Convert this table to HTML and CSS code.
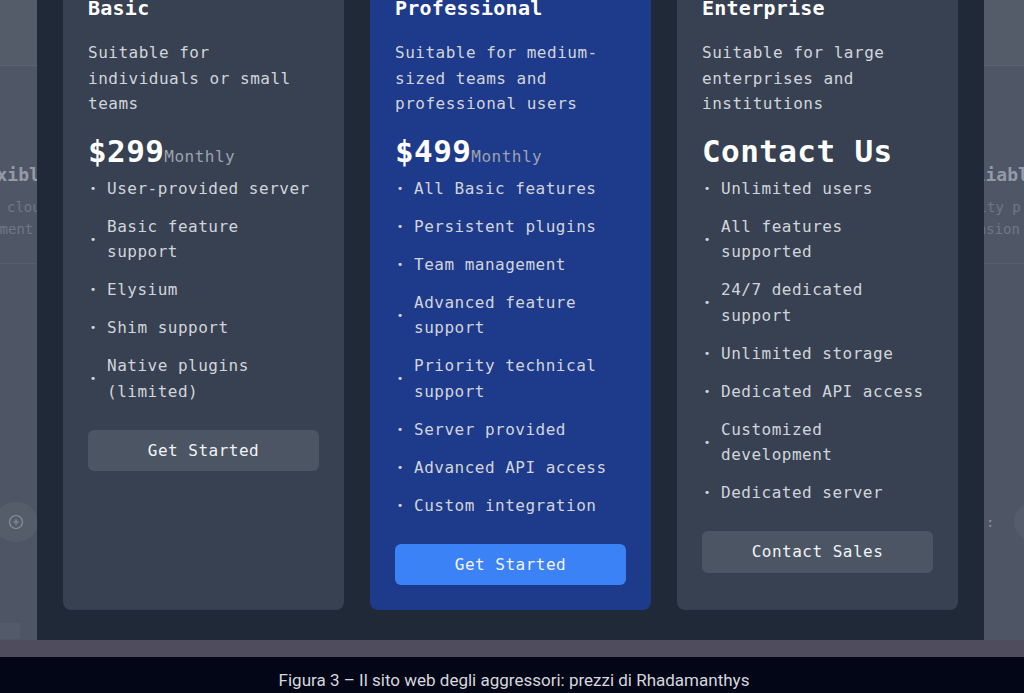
FILE: index.html
```html
<!DOCTYPE html>
<html lang="en">
<head>
<meta charset="utf-8">
<title>Pricing</title>
<link rel="stylesheet" href="styles.css">
</head>
<body>
<div class="screen">
  <div class="bg">
    <div class="bg-main">
      <div class="bg-side bg-left">
        <div class="bg-top"></div>
        <div class="bg-feature">
          <div class="frag-title fl-title">Flexible</div>
          <div class="frag-line fl-l1">Hybrid cloud</div>
          <div class="frag-line fl-l2">deployment</div>
        </div>
        <div class="bg-action">
          <div class="circle-btn">
            <svg width="16" height="16" viewBox="0 0 16 16"><circle cx="8" cy="8" r="6.5" fill="none" stroke="#8b919c" stroke-width="1.2"/><path d="M8 5.2v5.6M5.2 8h5.6" stroke="#8b919c" stroke-width="1.2"/></svg>
          </div>
        </div>
        <div class="bg-chip"></div>
      </div>
      <div class="bg-side bg-right">
        <div class="bg-top"></div>
        <div class="bg-feature">
          <div class="frag-title fr-title">Reliable</div>
          <div class="frag-line fr-l1">Stability p</div>
          <div class="frag-line fr-l2">extension</div>
        </div>
        <div class="bg-action bg-action-right">
          <span class="colon">:</span>
          <div class="circle-btn circle-right"></div>
        </div>
      </div>
    </div>
    <div class="bg-footer"></div>
  </div>

  <div class="overlay">
    <div class="modal">
      <div class="cards">
        <div class="card">
          <h3 class="plan">Basic</h3>
          <p class="desc">Suitable for individuals or small teams</p>
          <div class="price">$299<span class="per">Monthly</span></div>
          <ul class="features">
            <li><span class="dot">•</span><span>User-provided server</span></li>
            <li><span class="dot">•</span><span>Basic feature support</span></li>
            <li><span class="dot">•</span><span>Elysium</span></li>
            <li><span class="dot">•</span><span>Shim support</span></li>
            <li><span class="dot">•</span><span>Native plugins (limited)</span></li>
          </ul>
          <button class="btn">Get Started</button>
        </div>
        <div class="card card-pro">
          <h3 class="plan">Professional</h3>
          <p class="desc">Suitable for medium-sized teams and professional users</p>
          <div class="price">$499<span class="per">Monthly</span></div>
          <ul class="features">
            <li><span class="dot">•</span><span>All Basic features</span></li>
            <li><span class="dot">•</span><span>Persistent plugins</span></li>
            <li><span class="dot">•</span><span>Team management</span></li>
            <li><span class="dot">•</span><span>Advanced feature support</span></li>
            <li><span class="dot">•</span><span>Priority technical support</span></li>
            <li><span class="dot">•</span><span>Server provided</span></li>
            <li><span class="dot">•</span><span>Advanced API access</span></li>
            <li><span class="dot">•</span><span>Custom integration</span></li>
          </ul>
          <button class="btn btn-primary">Get Started</button>
        </div>
        <div class="card">
          <h3 class="plan">Enterprise</h3>
          <p class="desc">Suitable for large enterprises and institutions</p>
          <div class="price">Contact Us</div>
          <ul class="features">
            <li><span class="dot">•</span><span>Unlimited users</span></li>
            <li><span class="dot">•</span><span>All features supported</span></li>
            <li><span class="dot">•</span><span>24/7 dedicated support</span></li>
            <li><span class="dot">•</span><span>Unlimited storage</span></li>
            <li><span class="dot">•</span><span>Dedicated API access</span></li>
            <li><span class="dot">•</span><span>Customized development</span></li>
            <li><span class="dot">•</span><span>Dedicated server</span></li>
          </ul>
          <button class="btn">Contact Sales</button>
        </div>
      </div>
    </div>
  </div>
</div>
<div class="caption">Figura 3 – Il sito web degli aggressori: prezzi di Rhadamanthys</div>
</body>
</html>
```
FILE: styles.css
```css
* {
  box-sizing: border-box;
  margin: 0;
  padding: 0;
}

html, body {
  width: 1024px;
  height: 693px;
  overflow: hidden;
}

body {
  background: #020617;
  font-family: "DejaVu Sans Mono", "Liberation Mono", monospace;
}

.screen {
  position: relative;
  height: 657px;
  overflow: hidden;
}

/* dimmed page behind the modal */
.bg {
  display: flex;
  flex-direction: column;
  height: 100%;
  background: #4e5665;
}

.bg-main {
  flex: 1;
  display: flex;
  justify-content: space-between;
}

.bg-side {
  width: 40px;
  overflow: hidden;
  display: flex;
  flex-direction: column;
  white-space: nowrap;
}

.bg-left {
  width: 37px;
}

.bg-top {
  height: 66px;
  background: #545b69;
  border-bottom: 1px solid #5b6270;
}

.bg-feature {
  height: 198px;
  padding-top: 97px;
  border-bottom: 1px solid #575e6c;
  background: #4f5766;
}

.frag-title {
  font-size: 18px;
  line-height: 24px;
  font-weight: 700;
  color: #959ba6;
}

.frag-line {
  font-size: 14px;
  line-height: 22px;
  color: #6f7784;
}

.fl-title { margin-left: -36px; }
.fl-l1 { margin-left: -52px; margin-top: 9px; }
.fl-l2 { margin-left: -51px; }

.fr-title { margin-left: -31px; }
.fr-l1 { margin-left: -56px; margin-top: 9px; }
.fr-l2 { margin-left: -40px; }

.bg-action {
  margin-top: 238px;
  height: 40px;
  display: flex;
  align-items: center;
}

.circle-btn {
  width: 44px;
  height: 40px;
  border-radius: 50%;
  background: #555d6b;
  display: flex;
  align-items: center;
  justify-content: center;
  margin-left: -6px;
  flex-shrink: 0;
}

.bg-action-right {
  gap: 8px;
}

.colon {
  margin-left: 2px;
  color: #8b919c;
  font-size: 14px;
}

.circle-right {
  margin-left: 12px;
}

.bg-chip {
  margin-top: 81px;
  width: 20px;
  height: 16px;
  background: #535b6a;
}

.bg-footer {
  height: 17px;
  background: #4f4c5e;
}

/* modal */
.overlay {
  position: absolute;
  top: 0;
  left: 0;
  right: 0;
}

.modal {
  width: 947px;
  margin-left: 37px;
  margin-top: -57px;
  background: #1f2937;
  padding: 26px 26px 30px 26px;
}

.cards {
  display: grid;
  grid-template-columns: repeat(3, 1fr);
  column-gap: 26px;
}

.card {
  background: #374151;
  border-radius: 8px;
  padding: 25px;
}

.card-pro {
  background: #1e3a8a;
}

.plan {
  font-size: 20px;
  line-height: 28px;
  font-weight: 700;
  color: #ffffff;
  letter-spacing: 0.25px;
  margin-bottom: 18px;
}

.desc {
  font-size: 16px;
  line-height: 25.6px;
  color: #d1d5db;
  letter-spacing: 0.5px;
  margin-bottom: 15px;
}

.price {
  font-size: 31px;
  line-height: 36px;
  font-weight: 700;
  color: #ffffff;
  letter-spacing: 0.4px;
  margin-bottom: 7px;
  padding-top: 1px;
  height: 37px;
}

.per {
  font-size: 16px;
  line-height: 1;
  font-weight: 400;
  color: #9ca3af;
  letter-spacing: 0.5px;
}

.features {
  list-style: none;
  display: flex;
  flex-direction: column;
  gap: 12.4px;
  margin-bottom: 25.4px;
}

.features li {
  display: flex;
  align-items: center;
  font-size: 16px;
  line-height: 25.6px;
  color: #d1d5db;
  letter-spacing: 0.5px;
}

.dot {
  flex: 0 0 10px;
  width: 10px;
  text-align: center;
  font-size: 11px;
  margin-right: 9px;
  letter-spacing: 0;
}

.btn {
  display: block;
  width: 100%;
  border: none;
  border-radius: 6px;
  padding: 8px 0;
  background: #4b5563;
  color: #f3f4f6;
  font-family: "DejaVu Sans Mono", "Liberation Mono", monospace;
  font-size: 16px;
  line-height: 25.6px;
  letter-spacing: 0.5px;
}

.btn-primary {
  background: #3b82f6;
}

.caption {
  height: 36px;
  display: flex;
  align-items: center;
  justify-content: center;
  padding-left: 4px;
  padding-top: 9px;
  color: #d6d6de;
  font-family: Roboto, "Liberation Sans", sans-serif;
  font-size: 17px;
}
```
